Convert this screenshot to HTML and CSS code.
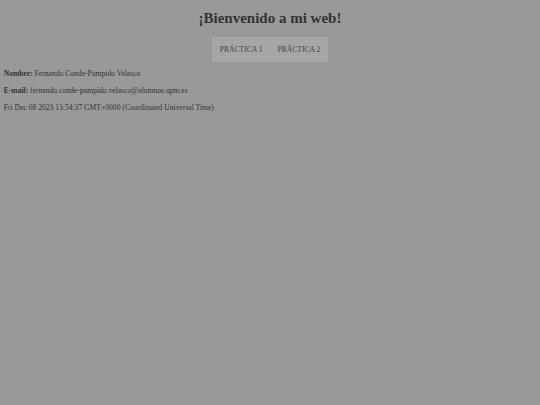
FILE: index.html
```html
<!DOCTYPE html>
<html lang="es">
<head>
<meta charset="utf-8">
<title>Bienvenido</title>
<link rel="stylesheet" href="styles.css">
</head>
<body>
<h1 class="title">¡Bienvenido a mi web!</h1>
<nav class="nav">
  <ul class="nav-list">
    <li><a class="nav-link" href="#">PRÁCTICA 1</a></li>
    <li><a class="nav-link" href="#">PRÁCTICA 2</a></li>
  </ul>
</nav>
<p class="info"><b>Nombre:</b> Fernando Conde-Pumpido Velasco</p>
<p class="info"><b>E-mail:</b> fernando.conde-pumpido.velasco@alumnos.upm.es</p>
<p class="info">Fri Dec 08 2023 13:54:37 GMT+0000 (Coordinated Universal Time)</p>
</body>
</html>
```

FILE: styles.css
```css
html {
  background: #999999;
}
body {
  margin: 3.75px;
  font-family: "Liberation Serif", "Times New Roman", serif;
  font-size: 7.6px;
  color: #333333;
  background: #999999;
}
.title {
  text-align: center;
  font-size: 15px;
  font-weight: bold;
  margin: 6px 0 10px;
  color: #333333;
}
.nav {
  display: flex;
  justify-content: center;
}
.nav-list {
  display: flex;
  list-style: none;
  margin: 0;
  padding: 0;
  background: #a6a6a6;
}
.nav-link {
  display: block;
  padding: 8px 7.5px;
  color: #444444;
  text-decoration: none;
}
.info {
  margin: 7.6px 0;
}
```
